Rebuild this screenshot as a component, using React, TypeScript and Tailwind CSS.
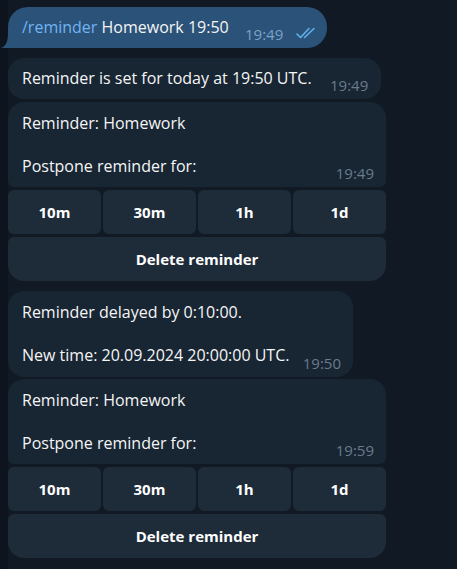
import React from "react";

const font = { fontFamily: '"Open Sans", "Noto Sans", sans-serif' };

function Checks() {
  return (
    <svg width="22" height="12" viewBox="0 0 22 12" fill="none" stroke="#5fb0ef" strokeWidth="1.6" strokeLinecap="round" strokeLinejoin="round">
      <path d="M1 7 L4.5 10.5 L13 1.5" />
      <path d="M8.5 10.5 L18 1.5" />
    </svg>
  );
}

function Buttons() {
  return (
    <div className="flex flex-col gap-[3px] mt-[3px]">
      <div className="grid grid-cols-4 gap-[2px]">
        {["10m", "30m", "1h", "1d"].map((t) => (
          <div key={t} className="h-[44px] rounded-[6px] bg-[#1e2b39] flex items-center justify-center text-[15px] font-bold text-white">
            {t}
          </div>
        ))}
      </div>
      <div className="h-[44px] rounded-t-[6px] rounded-b-[16px] bg-[#1e2b39] flex items-center justify-center text-[15px] font-bold text-white">
        Delete reminder
      </div>
    </div>
  );
}

function ReminderCard({ time }: { time: string }) {
  return (
    <div className="w-[378px]">
      <div className="relative h-[85px] rounded-t-[16px] rounded-b-[6px] bg-[#182533] pl-[14px] pr-[12px] pt-[11px] text-[16px] leading-[21.5px] text-[#f5f5f5]">
        <div>Reminder: Homework</div>
        <div>&nbsp;</div>
        <div>Postpone reminder for:</div>
        <span className="absolute right-[12px] bottom-[4px] text-[15px] leading-[20px] text-[#6a7b8c]">{time}</span>
      </div>
      <Buttons />
    </div>
  );
}

export default function App() {
  return (
    <div className="w-[457px] h-[569px] bg-[#0e1621] flex" style={font}>
      <div className="w-[8px] bg-[#0d141d]" />
      <div className="flex-1 bg-[#111a24] flex flex-col pt-[7px]">
        <div className="relative self-start">
          <svg className="absolute left-[-7px] bottom-0" width="14" height="16" viewBox="0 0 14 16">
            <path d="M14 0 L14 16 L0 16 C5 14 7 10 7 0 Z" fill="#2b5278" />
          </svg>
          <div className="relative h-[41px] w-[319px] rounded-[20px] rounded-bl-[0px] bg-[#2b5278] pl-[14px] flex items-center text-[16px] text-[#f5f5f5]">
            <span className="mt-[-1px]">
              <span className="text-[#71b5f2]">/reminder</span> Homework 19:50
            </span>
            <span className="absolute left-[237px] top-[17px] text-[15px] leading-[20px] text-[#7aa3cb]">19:49</span>
            <span className="absolute left-[288px] top-[20px]">
              <Checks />
            </span>
          </div>
        </div>

        <div className="mt-[10px] relative w-[373px] h-[41px] rounded-[16px] bg-[#182533] pl-[14px] flex items-center text-[16px] text-[#f5f5f5]">
          <span className="mt-[-1px]">Reminder is set for today at 19:50 UTC.</span>
          <span className="absolute left-[322px] top-[17px] text-[15px] leading-[20px] text-[#6a7b8c]">19:49</span>
        </div>

        <div className="mt-[3px]">
          <ReminderCard time="19:49" />
        </div>

        <div className="mt-[10px] relative w-[345px] h-[86px] rounded-[16px] bg-[#182533] pl-[14px] pt-[11px] text-[16px] leading-[21.5px] text-[#f5f5f5]">
          <div>Reminder delayed by 0:10:00.</div>
          <div>&nbsp;</div>
          <div>New time: 20.09.2024 20:00:00 UTC.</div>
          <span className="absolute right-[12px] bottom-[4px] text-[15px] leading-[20px] text-[#6a7b8c]">19:50</span>
        </div>

        <div className="mt-[2px]">
          <ReminderCard time="19:59" />
        </div>
      </div>
    </div>
  );
}
